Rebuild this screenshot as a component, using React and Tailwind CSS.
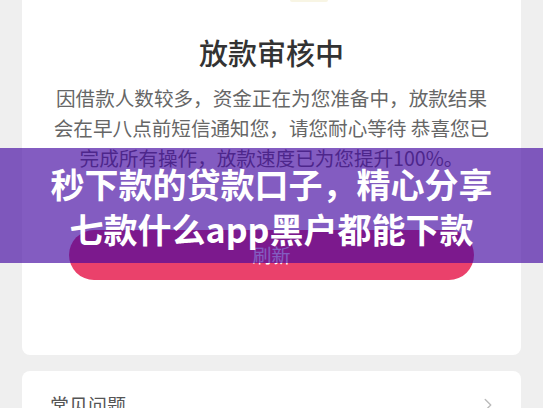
import { ChevronRight } from 'lucide-react';

const cjk = { fontFamily: '"Noto Sans CJK SC", "Noto Sans", sans-serif' };

export default function App() {
  return (
    <div className="relative h-[408px] w-[543px] overflow-hidden bg-[#efefef] px-[22px]" style={cjk}>
      {/* status card */}
      <div className="flex flex-col items-center rounded-b-[8px] bg-white pb-[75px]">
        <div className="ml-[268px] h-[2px] w-[38px] self-start rounded-b-full bg-[#f8f5e4]" />
        <h1 className="mt-[30px] text-[29px] leading-[40px] font-medium text-[#333]">放款审核中</h1>
        <p className="mt-[11px] w-[440px] text-center text-[19.6px] leading-[30px] text-[#666]">
          因借款人数较多，资金正在为您准备中，放款结果会在早八点前短信通知您，请您耐心等待 恭喜您已完成所有操作，放款速度已为您提升100%。
        </p>
        <button className="mt-[57px] h-[50px] w-[405px] rounded-full bg-[#ea416b] text-[19px] text-white">刷新</button>
      </div>

      {/* faq card */}
      <div className="mt-[16px] flex items-center justify-between rounded-[8px] bg-white pt-[20px] pr-[22px] pl-[28px] pb-[20px]">
        <span className="text-[19px] leading-[28px] text-[#555]">常见问题</span>
        <ChevronRight size={22} strokeWidth={1.5} className="text-[#bbb]" />
      </div>

      {/* headline overlay */}
      <div className="absolute top-[148px] left-0 flex h-[115px] w-[543px] flex-col items-center justify-center bg-[#4105a0]/65">
        <p className="text-[34px] leading-[45px] font-bold text-white">秒下款的贷款口子，精心分享</p>
        <p className="text-[34px] leading-[45px] font-bold text-white">七款什么app黑户都能下款</p>
      </div>
    </div>
  );
}
